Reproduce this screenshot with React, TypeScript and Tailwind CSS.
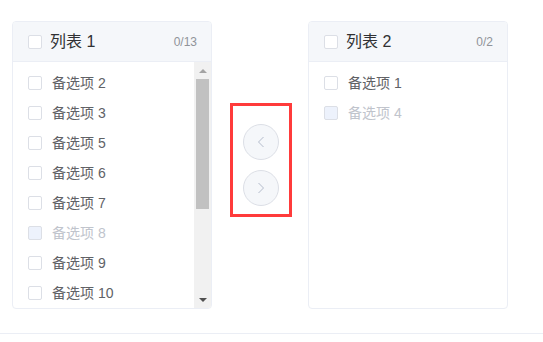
import React from "react";

type Item = { label: string; disabled?: boolean };

const leftItems: Item[] = [
  { label: "备选项 2" },
  { label: "备选项 3" },
  { label: "备选项 5" },
  { label: "备选项 6" },
  { label: "备选项 7" },
  { label: "备选项 8", disabled: true },
  { label: "备选项 9" },
  { label: "备选项 10" },
];

const rightItems: Item[] = [
  { label: "备选项 1" },
  { label: "备选项 4", disabled: true },
];

const Checkbox = ({ disabled }: { disabled?: boolean }) => (
  <span
    className={`w-[14px] h-[14px] rounded-[2px] border border-[#dcdfe6] shrink-0 ${
      disabled ? "bg-[#edf2fc]" : "bg-white"
    }`}
  />
);

const Row = ({ item }: { item: Item }) => (
  <div className="h-[30px] flex items-center pl-[15px]">
    <Checkbox disabled={item.disabled} />
    <span
      className={`ml-[10px] text-[14px] ${
        item.disabled ? "text-[#c0c4cc]" : "text-[#606266]"
      }`}
    >
      {item.label}
    </span>
  </div>
);

const Panel = ({
  title,
  count,
  items,
  scroll,
}: {
  title: string;
  count: string;
  items: Item[];
  scroll?: boolean;
}) => (
  <div className="w-[200px] h-[288px] border border-[#ebeef5] rounded-[4px] flex flex-col overflow-hidden bg-white">
    <div className="h-[40px] shrink-0 bg-[#f5f7fa] border-b border-[#ebeef5] flex items-center pl-[15px] pr-[14px] pt-[1px]">
      <Checkbox />
      <span className="ml-[8px] text-[16px] text-[#303133]">{title}</span>
      <span className="ml-auto text-[12px] text-[#909399]">{count}</span>
    </div>
    <div className="flex flex-1 min-h-0">
      <div className="flex-1 pt-[6px] overflow-hidden">
        {items.map((it) => (
          <Row key={it.label} item={it} />
        ))}
      </div>
      {scroll && (
        <div className="w-[17px] bg-[#f1f1f1] flex flex-col items-center">
          <div className="h-[17px] flex items-center justify-center">
            <span className="w-0 h-0 border-l-[4px] border-r-[4px] border-b-[4px] border-l-transparent border-r-transparent border-b-[#a3a3a3]" />
          </div>
          <div className="w-[13px] h-[130px] bg-[#c1c1c1]" />
          <div className="flex-1" />
          <div className="h-[17px] flex items-center justify-center">
            <span className="w-0 h-0 border-l-[4px] border-r-[4px] border-t-[4px] border-l-transparent border-r-transparent border-t-[#505050]" />
          </div>
        </div>
      )}
    </div>
  </div>
);

const ArrowButton = ({ dir }: { dir: "left" | "right" }) => (
  <div className="w-[36px] h-[36px] rounded-full border border-[#dcdfe6] bg-[#f5f7fa] flex items-center justify-center">
    <svg width="12" height="12" viewBox="0 0 12 12" fill="none">
      <path
        d={dir === "left" ? "M8.5 1 L3.5 6 L8.5 11" : "M3.5 1 L8.5 6 L3.5 11"}
        stroke="#b4bccc"
        strokeWidth="1"
      />
    </svg>
  </div>
);

export default function App() {
  return (
    <div
      className="w-[543px] h-[342px] bg-white"
      style={{ fontFamily: '"Liberation Sans", "Noto Sans CJK SC", sans-serif' }}
    >
      <div className="h-[334px] border-b border-[#ebeef5] pt-[21px] pl-[12px]">
        <div className="flex items-start">
          <Panel title="列表 1" count="0/13" items={leftItems} scroll />
          <div className="ml-[18px] mr-[16px] mt-[82px] border-[3px] border-[#ff3b3b] pt-[18px] pb-[8px] px-[10px] flex flex-col gap-[10px]">
            <ArrowButton dir="left" />
            <ArrowButton dir="right" />
          </div>
          <Panel title="列表 2" count="0/2" items={rightItems} />
        </div>
      </div>
    </div>
  );
}
